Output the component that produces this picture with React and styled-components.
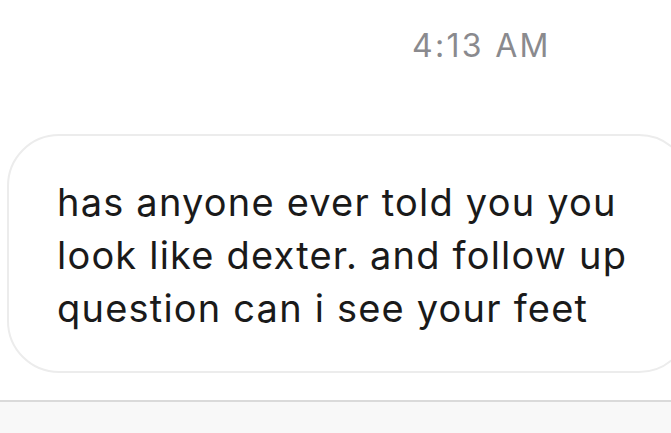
import styled, { createGlobalStyle } from "styled-components";

const GlobalStyle = createGlobalStyle`
  html, body {
    margin: 0;
    padding: 0;
    background: #ffffff;
    overflow: hidden;
  }
  body {
    font-family: Inter, "Liberation Sans", Arial, sans-serif;
  }
`

const Screen = styled.div`
  width: 671px;
  height: 433px;
  overflow: hidden;

  display: flex;
  flex-direction: column;
  background: #ffffff;
`

const TimeRow = styled.div`
  height: 134px;
  box-sizing: border-box;
  padding: 26px 0 0 412px;

  font-size: 32px;
  line-height: 40px;
  letter-spacing: 2.3px;
  color: #8a8a8e;
`

const Bubble = styled.div`
  margin: 0 -20px 0 7px;
  padding: 40px 40px 36px 48px;

  border: 2px solid #ececec;
  border-radius: 52px;
  background: #ffffff;

  font-size: 38px;
  line-height: 53px;
  letter-spacing: 1.2px;
  color: #1a1a1a;
`

const Footer = styled.div`
  margin-top: 27px;
  flex: 1;

  border-top: 2px solid #dadada;
  background: #f8f8f8;
`

function App() {
  return (
    <>
      <GlobalStyle />
      <Screen>
        <TimeRow>4:13 AM</TimeRow>
        <Bubble>
          has anyone ever told you you<br />
          look like dexter. and follow up<br />
          question can i see your feet
        </Bubble>
        <Footer />
      </Screen>
    </>
  );
}

export default App
